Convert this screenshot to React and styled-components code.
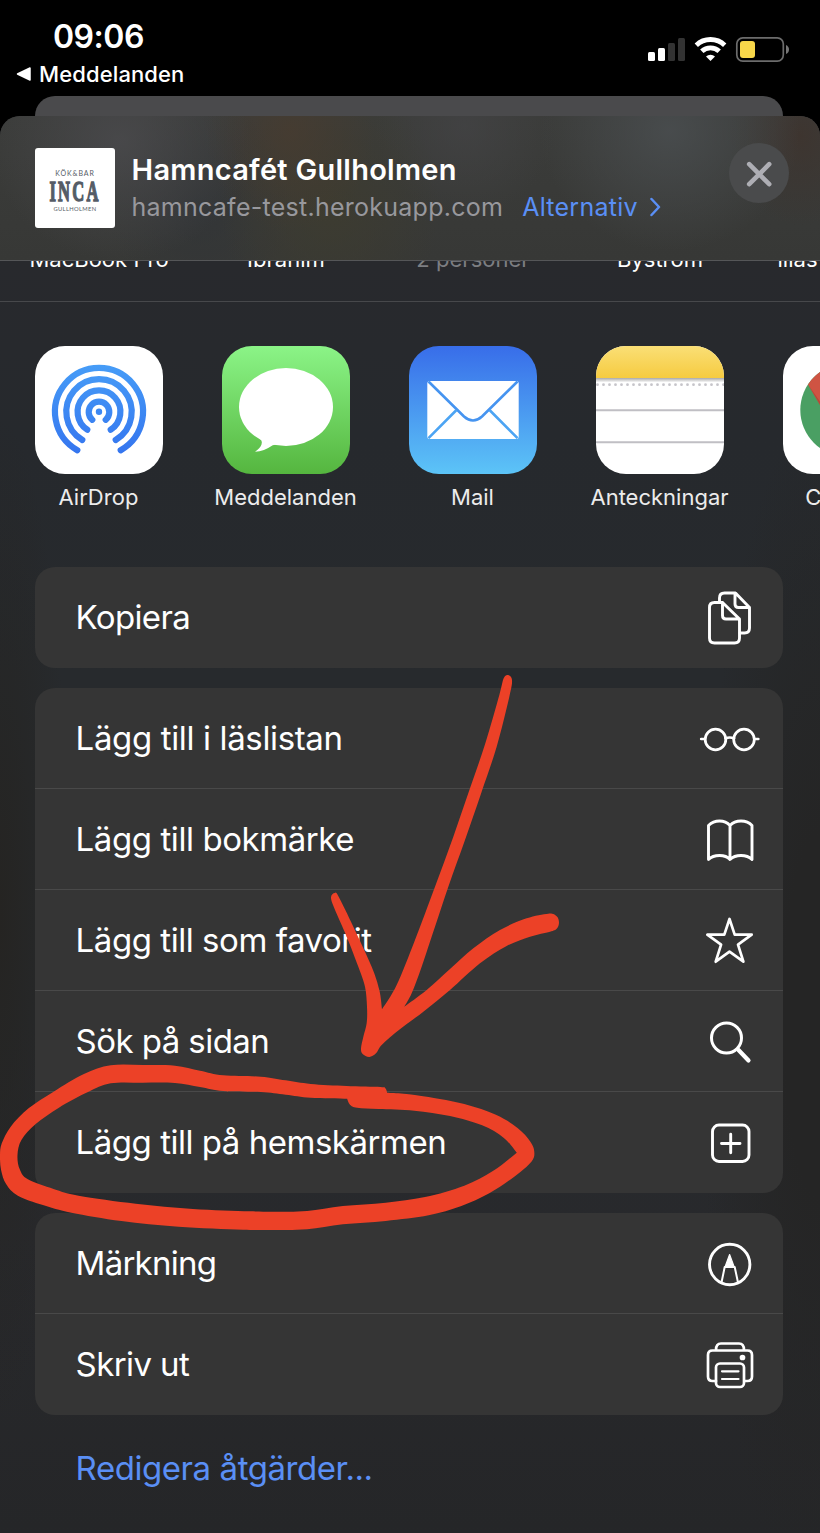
import React from "react";
import styled, { createGlobalStyle } from "styled-components";

const Global = createGlobalStyle`
  * { box-sizing: border-box; }
  body { margin: 0; background: #000; }
`;

const Screen = styled.div`
  position: relative;
  width: 820px;
  height: 1533px;
  overflow: hidden;
  background: #000;
  color: #fff;
  font-family: Inter, "Liberation Sans", sans-serif;
  display: flex;
  flex-direction: column;
`;

const StatusBar = styled.header`
  height: 96px;
  flex: none;
  display: flex;
  justify-content: space-between;
  padding: 0 30px 0 16px;
`;

const Clock = styled.div`
  margin: 17px 0 0 37px;
  font-size: 32px;
  line-height: 40px;
  font-weight: 600;
  letter-spacing: -0.5px;
`;

const BackLink = styled.div`
  display: flex;
  align-items: center;
  gap: 8px;
  margin-top: 3px;
  font-size: 22px;
  line-height: 28px;
  font-weight: 500;
  letter-spacing: 0.12px;
  white-space: nowrap;
`;

const StatusIcons = styled.div`
  display: flex;
  align-items: flex-start;
  padding-top: 36px;
`;

const BackSheet = styled.div`
  height: 20px;
  flex: none;
  margin: 0 37px 0 35px;
  border-radius: 20px 20px 0 0;
  background: #4a4a4c;
`;

const Sheet = styled.main`
  flex: 1;
  min-height: 0;
  display: flex;
  flex-direction: column;
  border-radius: 20px 20px 0 0;
  overflow: hidden;
  background:
    radial-gradient(ellipse 70px 500px at 0 800px, #252422, transparent),
    radial-gradient(ellipse 120px 600px at 100% 900px, #252525 30%, transparent),
    linear-gradient(#28292d 145px, #26292d 320px, #272a2d 560px, #272a2d 900px, #28292c 1120px, #252628 1417px);
`;

const SheetHeader = styled.section`
  height: 145px;
  flex: none;
  display: flex;
  padding: 32px 31px 0 35px;
  border-bottom: 1px solid #555658;
  background:
    radial-gradient(ellipse 85px 100px at 290px 15px, rgba(74, 60, 46, 0.65), transparent),
    radial-gradient(ellipse 110px 130px at 330px 90px, rgba(62, 60, 46, 0.75), transparent),
    radial-gradient(ellipse 130px 120px at 120px 25px, rgba(75, 75, 78, 0.8), transparent),
    radial-gradient(ellipse 90px 110px at 200px 90px, rgba(49, 52, 55, 0.8), transparent),
    radial-gradient(ellipse 130px 120px at 670px 15px, rgba(74, 78, 80, 0.85), transparent),
    radial-gradient(ellipse 90px 90px at 465px 10px, rgba(68, 68, 70, 0.7), transparent),
    radial-gradient(ellipse 70px 90px at 800px 20px, rgba(62, 51, 45, 0.8), transparent),
    linear-gradient(#3b3c3a, #373836);
`;

const Favicon = styled.div`
  width: 80px;
  height: 80px;
  flex: none;
  border-radius: 3px;
  background: #fff;
  color: #555c66;
  display: flex;
  flex-direction: column;
  align-items: center;
  padding-top: 21px;
`;

const FaviconSmall = styled.span`
  font: ${(p) => p.$size}px/9px Lato, sans-serif;
  letter-spacing: ${(p) => p.$track}px;
  white-space: nowrap;
`;

const FaviconWord = styled.span`
  font: 700 29px/24px "Liberation Serif", serif;
  height: 24px;
  margin: 1px 0 1px;
  letter-spacing: 4px;
  transform: scaleX(0.57);
  white-space: nowrap;
  -webkit-text-stroke: 1.4px #555c66;
`;

const Heading = styled.div`
  flex: 1;
  padding-left: 16.5px;
  white-space: nowrap;
`;

const Title = styled.h1`
  margin: 4px 0 0;
  font-size: 29px;
  line-height: 36px;
  font-weight: 600;
  letter-spacing: 0.27px;
`;

const Subtitle = styled.div`
  display: flex;
  align-items: center;
  font-size: 25px;
  line-height: 38px;
  color: #98989d;
  letter-spacing: 0.26px;
`;

const Options = styled.a`
  display: flex;
  align-items: center;
  gap: 12.5px;
  margin-left: 19px;
  color: #5a8ff5;
`;

const CloseButton = styled.button`
  width: 60px;
  height: 60px;
  margin-top: -5px;
  padding: 1px 0 0;
  border: 0;
  border-radius: 50%;
  background: #4a4b4c;
  display: grid;
  place-items: center;
`;

const People = styled.section`
  height: 41px;
  flex: none;
  display: flex;
  overflow: hidden;
  border-bottom: 1px solid #47484b;
`;

const Person = styled.div`
  width: 187px;
  flex: none;
  margin-top: -16px;
  font-size: 22px;
  line-height: 28px;
  text-align: center;
  letter-spacing: 0.02px;
  white-space: nowrap;
  color: ${(p) => (p.$muted ? "#7d7e82" : "#fff")};
  &:first-child { margin-left: 5.5px; }
  &:last-child { text-align: left; padding-left: 24px; }
`;

const Apps = styled.section`
  display: flex;
  flex: none;
  height: 265px;
  padding: 44px 0 0 5px;
  overflow: hidden;
`;

const AppItem = styled.div`
  width: 187px;
  flex: none;
  display: flex;
  flex-direction: column;
  align-items: center;
  font-size: 22px;
  line-height: 28px;
  letter-spacing: ${(p) => p.$track}px;
  color: #ececec;
`;

const AppIcon = styled.div`
  width: 128px;
  height: 128px;
  border-radius: 30px;
  overflow: hidden;
  margin-bottom: 9px;
  background: ${(p) => p.$bg};
  svg { display: block; }
`;

const Card = styled.section`
  flex: none;
  margin: 0 37px 20px 35px;
  border-radius: 20px;
  background: #353535;
  overflow: hidden;
`;

const RowLabel = styled.span`
  letter-spacing: ${(p) => p.$track}px;
`;

const Row = styled.div`
  height: 101px;
  display: flex;
  align-items: center;
  justify-content: space-between;
  padding: 0 21px 0 40.6px;
  font-size: 33px;
  white-space: nowrap;
  border-bottom: 1px solid #494949;
  &:last-child { border-bottom: 0; }
  &:last-child ${RowLabel} { padding-bottom: 2px; }
`;

const EditLink = styled.a`
  margin-left: 75.6px;
  margin-top: 12px;
  font-size: 33px;
  line-height: 42px;
  letter-spacing: -0.44px;
  color: #5a8ff5;
`;

const Markup = styled.svg`
  position: absolute;
  inset: 0;
  pointer-events: none;
`;

const Glyph = ({ children, w = 2.9 }) => (
  <svg width="64" height="64" viewBox="0 0 64 64" fill="none" stroke="#fff" strokeWidth={w} strokeLinecap="round" strokeLinejoin="round">
    {children}
  </svg>
);

const glyphs = {
  copy: (
    <Glyph>
      <path d="M21.500 15.500v-3.500q0-5 5-5h11L51.500 21.500v20.500q0 5-5 5h-4.500M37 7v11q0 3.500 3.500 3.500h11" />
      <path d="M24.500 17.500h-8q-5 0-5 5v30.500q0 5 5 5h20q5 0 5-5V34zM24.500 17.500v13q0 3.500 3.500 3.500H41.500" transform="translate(0 -1)" />
    </Glyph>
  ),
  glasses: (
    <Glyph w={2.7}>
      <circle cx="17.500" cy="33.500" r="10.300" />
      <circle cx="46" cy="33.500" r="10.300" />
      <path d="M27.500 32.500q4.200-2 8.500 0M3.200 33h3.800M56.500 33h3.800" />
    </Glyph>
  ),
  book: (
    <Glyph>
      <path d="M32 18.500Q28 14 21.500 14t-11 4.500v34q4-4 11-4t10.500 4q4-4 11-4t11 4v-34Q50 14 43 14t-11 4.500zV52" />
    </Glyph>
  ),
  star: (
    <Glyph w={2.7}>
      <path d="M31.500 11l5.200 15.700 17 0-13.700 10 5.400 17L31.500 43.700 17.700 53.700l5.400-17-13.800-10 17 0z" />
    </Glyph>
  ),
  search: (
    <Glyph w={3}>
      <circle cx="28.500" cy="29" r="15" />
      <path strokeWidth="4.200" d="M40.500 41L50.500 51.500" />
    </Glyph>
  ),
  add: (
    <Glyph>
      <rect x="14.500" y="14" width="36.500" height="36.500" rx="6.500" />
      <path d="M32.700 23.300v18.500M23.500 32.500h18.500" />
    </Glyph>
  ),
  markup: (
    <Glyph>
      <circle cx="31.700" cy="33.500" r="20.200" />
      <path strokeWidth="2" d="M23.500 51.500l3.200-15.500h10l3.300 15.500" />
      <path fill="#fff" strokeWidth="1.200" d="M27 36l4.600-12.500 4.600 12.500z" />
    </Glyph>
  ),
  print: (
    <Glyph w={2.7}>
      <path d="M18 48h-3.500q-4.500 0-4.500-4.500V22q0-4.500 4.500-4.500h35q4.500 0 4.500 4.500v21.500q0 4.500-4.500 4.500h-3M18 17q0-6.500 5-6.500h18q5 0 5 6.500" />
      <rect x="18" y="30.500" width="28" height="23.500" rx="4" />
      <path strokeWidth="2.200" d="M24 38.300h16.500M24 46h16.500" />
      <circle cx="44.500" cy="24.500" r="1.500" fill="#fff" />
    </Glyph>
  ),
};

const AirDropArt = () => (
  <svg width="128" height="128" fill="none" stroke="url(#air)" strokeWidth="6.200" strokeLinecap="round">
    <defs>
      <linearGradient id="air" gradientUnits="userSpaceOnUse" x1="0" y1="19" x2="0" y2="106">
        <stop stopColor="#469cf7" />
        <stop offset="1" stopColor="#3576ef" />
      </linearGradient>
    </defs>
    <path d="M42.300 104.200A44 44 0 1 1 85.700 104.200" />
    <path d="M47.300 94A32.700 32.700 0 1 1 80.700 94" />
    <path d="M52.300 83.700A21.400 21.400 0 1 1 75.700 83.700" />
    <path d="M57.300 73.800A10.300 10.300 0 1 1 70.700 73.800" />
    <circle cx="64" cy="65.700" r="3.200" fill="#3c87f3" stroke="none" />
  </svg>
);

const MessagesArt = () => (
  <svg width="128" height="128" fill="#fff">
    <ellipse cx="64" cy="61" rx="47" ry="39" />
    <path d="M36 91q5 3 3.500 7.500-1.500 4-6.500 7.300 9-.5 17.700-6.500l10-2-10-14z" />
  </svg>
);

const MailArt = () => (
  <svg width="128" height="128" fill="none" stroke="#4694f0" strokeWidth="2.600">
    <rect x="18.300" y="35" width="91.400" height="58" rx="2.500" fill="#fff" stroke="none" />
    <path d="M19.500 35.500L55 70.500q9 8 18 0L108.500 35.500" />
    <path stroke="#4ca4f3" d="M47.500 64L19.500 92.200M80.500 64L108.500 92.200" />
  </svg>
);

const NotesArt = () => (
  <svg width="128" height="128">
    <defs>
      <linearGradient id="pad" x2="0" y2="1">
        <stop stopColor="#fadf76" />
        <stop offset="1" stopColor="#f6cb40" />
      </linearGradient>
      <linearGradient id="fold" x2="0" y2="1">
        <stop stopColor="#a9a9a9" />
        <stop offset="1" stopColor="#fff" />
      </linearGradient>
    </defs>
    <rect width="128" height="32" fill="url(#pad)" />
    <rect y="32" width="128" height="4.500" fill="url(#fold)" />
    <path d="M1.500 38.700H128" stroke="#c6c5ca" strokeWidth="2.800" strokeLinecap="round" strokeDasharray="0 6" />
    <path d="M0 64.300h128M0 96.300h128" stroke="#c0bfc4" strokeWidth="2" />
  </svg>
);

const ChromeArt = () => (
  <svg width="128" height="128">
    <circle cx="64" cy="64" r="46.700" fill="#4a9f63" />
    <path d="M25 38.500A46.700 46.700 0 0 1 104 40H64L44 71z" fill="#cf5443" />
    <path d="M25 38.500L44 71l1-4z" fill="#b54a38" />
    <path d="M64 40h40A46.700 46.700 0 0 1 64 110.700L84 76z" fill="#f6cb45" />
    <circle cx="64" cy="64" r="21" fill="#fff" />
    <circle cx="64" cy="64" r="17" fill="#4a86ee" />
  </svg>
);

/* Joins the points with a Catmull-Rom curve. */
const curve = (pts) =>
  pts.slice(1).map((b, i) => {
    const a = pts[i];
    const p = pts[i - 1] || a;
    const n = pts[i + 2] || b;
    return `C${a[0] + (b[0] - p[0]) / 6} ${a[1] + (b[1] - p[1]) / 6} ${b[0] - (n[0] - a[0]) / 6} ${b[1] - (n[1] - a[1]) / 6} ${b[0]} ${b[1]}`;
  }).join("");

const outline = (...runs) => `M${runs[0][0].join(" ")}${runs.map(curve).join("")}Z`;

const arrow = outline(
  [[246, 1048], [290, 975], [345, 840], [405, 680], [460, 530], [510, 385], [556, 250], [598, 105], [611, 55], [624, 45], [636, 60], [628, 110], [590, 260], [545, 395], [495, 540], [445, 680], [405, 800], [365, 920], [335, 1000], [313, 1040]],
  [[313, 1040], [380, 990], [450, 927], [520, 865], [600, 810], [680, 775], [745, 761], [770, 769], [777, 788], [770, 806], [750, 815], [690, 830], [620, 858], [540, 910], [450, 990], [370, 1055], [290, 1115], [245, 1155], [228, 1180], [208, 1191], [188, 1182], [183, 1165], [190, 1130], [200, 1090], [201, 1040], [195, 980], [175, 920], [140, 830], [103, 745], [93, 712], [104, 699], [116, 710], [160, 800], [215, 920], [238, 990], [246, 1048]]
);

const loopOuter = outline(
  [[1084, 158], [1079, 145], [1065, 141], [970, 138], [870, 132], [800, 121], [730, 110], [625, 106], [560, 92], [490, 77], [400, 75], [310, 76], [235, 102], [150, 155], [80, 205], [30, 260], [5, 310], [0, 345], [3, 390], [17, 432], [50, 467], [120, 495], [200, 518], [340, 543], [500, 560], [680, 569], [770, 570], [860, 568], [960, 553], [1080, 543], [1200, 526], [1290, 499], [1370, 460], [1440, 410], [1488, 365], [1496, 335], [1485, 305], [1450, 265], [1390, 225], [1300, 192], [1200, 171], [1130, 161], [1084, 158]]
);
const loopInner = outline(
  [[972, 176], [870, 173], [800, 164], [730, 156], [625, 153], [560, 141], [490, 129], [400, 128], [310, 130], [245, 157], [165, 203], [100, 252], [60, 300], [49, 345], [55, 387], [78, 418], [150, 447], [220, 467], [380, 491], [540, 507], [700, 514], [780, 515], [860, 513], [960, 498], [1080, 488], [1190, 471], [1300, 437], [1380, 393], [1447, 338]],
  [[1447, 338], [1410, 293], [1350, 256], [1260, 228], [1160, 212], [1060, 207], [1000, 203], [980, 194], [972, 176]]
);

const apps = [
  { name: "AirDrop", bg: "#fff", art: <AirDropArt />, track: 0.05 },
  { name: "Meddelanden", bg: "linear-gradient(#8bf487, #55b63f)", art: <MessagesArt />, track: 0 },
  { name: "Mail", bg: "linear-gradient(#386de9, #5cc4f7)", art: <MailArt />, track: 0 },
  { name: "Anteckningar", bg: "#fff", art: <NotesArt />, track: 0 },
  { name: "Chrome", bg: "#fff", art: <ChromeArt />, track: 0 },
];

const groups = [
  [["Kopiera", "copy", -0.65]],
  [
    ["Lägg till i läslistan", "glasses", -0.36],
    ["Lägg till bokmärke", "book", -0.42],
    ["Lägg till som favorit", "star", -0.45],
    ["Sök på sidan", "search", -0.56],
    ["Lägg till på hemskärmen", "add", -0.48],
  ],
  [
    ["Märkning", "markup", -0.75],
    ["Skriv ut", "print", -0.6],
  ],
];

export default function App() {
  return (
    <Screen>
      <Global />
      <StatusBar>
        <div>
          <Clock>09:06</Clock>
          <BackLink>
            <svg width="15" height="14"><path d="M1.500 7L14 1v12z" fill="#fff" stroke="#fff" strokeWidth="1.500" strokeLinejoin="round" /></svg>
            Meddelanden
          </BackLink>
        </div>
        <StatusIcons>
          <svg width="142" height="28" viewBox="648 36 142 28">
            <rect x="648" y="52" width="7" height="9" rx="1.500" fill="#fff" />
            <rect x="658" y="48" width="7" height="13" rx="1.500" fill="#fff" />
            <rect x="668" y="43" width="7" height="18" rx="1.500" fill="#333" />
            <rect x="678" y="38" width="7" height="23" rx="1.500" fill="#333" />
            <g fill="none" stroke="#fff" strokeWidth="4.800">
              <path d="M696.300 45.200a20.500 20.500 0 0 1 28.400 0" />
              <path d="M701.800 51.300a12.500 12.500 0 0 1 17.400 0" />
            </g>
            <path d="M710.500 61l-4.500-4.500a6.500 6.500 0 0 1 9 0z" fill="#fff" />
            <rect x="736.800" y="37.800" width="46.500" height="23.300" rx="6" fill="none" stroke="#6c6c6c" strokeWidth="1.700" />
            <rect x="740" y="41" width="15" height="17" rx="3" fill="#f8d74a" />
            <path d="M786 45v9q3-1.500 3-4.500t-3-4.500" fill="#777" />
          </svg>
        </StatusIcons>
      </StatusBar>
      <BackSheet />
      <Sheet>
        <SheetHeader>
          <Favicon>
            <FaviconSmall $size={7} $track={0.9}>KÖK&amp;BAR</FaviconSmall>
            <FaviconWord>INCA</FaviconWord>
            <FaviconSmall $size={5.8} $track={0.35}>GULLHOLMEN</FaviconSmall>
          </Favicon>
          <Heading>
            <Title>Hamncafét Gullholmen</Title>
            <Subtitle>
              hamncafe-test.herokuapp.com
              <Options>
                Alternativ
                <svg width="11" height="20" fill="none" stroke="#5a8ff5" strokeWidth="2.500" strokeLinecap="round" strokeLinejoin="round"><path d="M1.500 2L9 10l-7.500 8" /></svg>
              </Options>
            </Subtitle>
          </Heading>
          <CloseButton>
            <svg width="26" height="26" stroke="#aeaeb4" strokeWidth="4.600" strokeLinecap="round"><path d="M3.200 3.200l20 20M23.200 3.200L3.200 23.200" /></svg>
          </CloseButton>
        </SheetHeader>
        <People>
          <Person>MacBook Pro</Person>
          <Person>Ibrahim</Person>
          <Person $muted>2 personer</Person>
          <Person>Byström</Person>
          <Person>illas</Person>
        </People>
        <Apps>
          {apps.map((a) => (
            <AppItem key={a.name} $track={a.track}>
              <AppIcon $bg={a.bg}>{a.art}</AppIcon>
              {a.name}
            </AppItem>
          ))}
        </Apps>
        {groups.map((rows) => (
          <Card key={rows[0][0]}>
            {rows.map(([label, icon, track]) => (
              <Row key={label}>
                <RowLabel $track={track}>{label}</RowLabel>
                {glyphs[icon]}
              </Row>
            ))}
          </Card>
        ))}
        <EditLink>Redigera åtgärder...</EditLink>
      </Sheet>
      <Markup width="820" height="1533" fill="#ec4127">
        <path transform="translate(300 660) scale(0.33333)" d={arrow} />
        <path transform="translate(0 1040) scale(0.35714 0.33333)" fillRule="evenodd" d={loopOuter + loopInner} />
      </Markup>
    </Screen>
  );
}
